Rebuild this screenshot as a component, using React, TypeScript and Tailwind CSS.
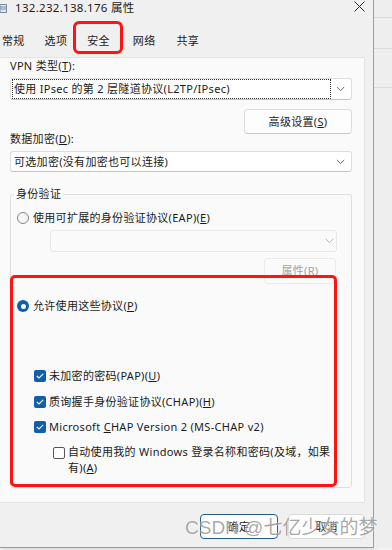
import type { ReactNode } from "react";

const TABS = [
  { label: "常规", cls: "ml-[2px]" },
  { label: "选项", cls: "ml-[20px]" },
  { label: "安全", cls: "ml-[20px]" },
  { label: "网络", cls: "ml-[23px]" },
  { label: "共享", cls: "ml-[21px]" },
];

function Chevron({ color = "#6b6b6b" }: { color?: string }) {
  return (
    <svg width="9" height="6" viewBox="0 0 9 6" className="shrink-0">
      <path d="M0.8 1 L4.5 4.6 L8.2 1" fill="none" stroke={color} strokeWidth="1" />
    </svg>
  );
}

function Combo({ children, focused }: { children: ReactNode; focused?: boolean }) {
  return (
    <div className="flex h-full w-full items-center rounded-[3px] border border-[#dedede] border-b-[#c4c4c4] bg-white pl-[2px] pr-[6px]">
      <div
        className={`flex h-[18px] flex-1 items-center pl-[1px] ${
          focused ? "outline-1 outline-dotted outline-[#333]" : ""
        }`}
      >
        {children}
      </div>
      <div className="ml-[6px]">
        <Chevron />
      </div>
    </div>
  );
}

function CheckBox({ checked }: { checked: boolean }) {
  if (!checked) {
    return <span className="inline-block h-[12px] w-[12px] shrink-0 rounded-[2px] border border-[#555] bg-white" />;
  }
  return (
    <span className="flex h-[12px] w-[12px] shrink-0 items-center justify-center rounded-[2px] bg-[#0f5fae]">
      <svg width="8" height="6" viewBox="0 0 8 6">
        <path d="M0.8 3 L3 5 L7.2 0.8" fill="none" stroke="#fff" strokeWidth="1.1" />
      </svg>
    </span>
  );
}

function Radio({ checked }: { checked: boolean }) {
  if (checked) {
    return (
      <span className="flex h-[12px] w-[12px] shrink-0 items-center justify-center rounded-full bg-[#0f5fae]">
        <span className="h-[5px] w-[5px] rounded-full bg-white" />
      </span>
    );
  }
  return <span className="inline-block h-[12px] w-[12px] shrink-0 rounded-full border border-[#858585] bg-[#f6f6f6]" />;
}

export default function App() {
  return (
    <div className="relative h-[550px] w-[392px] overflow-hidden bg-[#f4f4f4] text-[11px] leading-[16px] tracking-[0.3px] text-[#1b1b1b] [font-family:'Noto_Sans','Noto_Sans_CJK_SC',sans-serif]">
      <div className="flex">
        {/* dialog */}
        <div className="flex h-[548px] w-[374px] shrink-0 flex-col border-r border-b border-[#9c9c9c] bg-[#f0f0f0] shadow-[2px_2px_6px_rgba(0,0,0,0.12)]">
          {/* title bar */}
          <div className="flex h-[16px] items-center">
            <svg width="7" height="9" viewBox="0 0 7 9">
              <rect x="0" y="0.5" width="6.5" height="8" fill="#dfe6ee" stroke="#7d8fa6" strokeWidth="1" />
              <path d="M0 3 H6 M0 5 H6" stroke="#7d8fa6" strokeWidth="1" />
            </svg>
            <span className="ml-[8px] text-[11.5px]">132.232.138.176 属性</span>
            <svg width="11" height="11" viewBox="0 0 11 11" className="ml-auto mr-[8px] -mt-[3px]">
              <path d="M0.5 0.5 L10.5 10.5 M10.5 0.5 L0.5 10.5" stroke="#2b2b2b" strokeWidth="1" />
            </svg>
          </div>

          {/* tabs */}
          <div className="flex h-[41px] items-start pt-[17px]">
            {TABS.map((t) => (
              <span key={t.label} className={t.cls}>
                {t.label}
              </span>
            ))}
          </div>

          {/* tab page */}
          <div className="flex h-[446px] w-[365px] flex-col border-t border-r border-b border-[#e2e2e2] bg-[#fafafa] pl-[10px] pr-[12px]">
            <div className="h-[16px]">
              VPN 类型(<u>T</u>):
            </div>
            <div className="mt-[4px] h-[22px]">
              <Combo focused>使用 IPsec 的第 2 层隧道协议(L2TP/IPsec)</Combo>
            </div>
            <button className="mt-[9px] flex h-[25px] w-[108px] items-center justify-center self-end rounded-[4px] border border-[#dcdcdc] border-b-[#c8c8c8] bg-[#fdfdfd]">
              高级设置(<u>S</u>)
            </button>
            <div className="-mt-[3px] h-[16px]">
              数据加密(<u>D</u>):
            </div>
            <div className="mt-[4px] h-[21px]">
              <Combo>可选加密(没有加密也可以连接)</Combo>
            </div>

            <fieldset className="mt-[14px] w-[342px] rounded-[3px] border border-[#dedede] pb-[11px]">
              <legend className="ml-[3px] px-[2px]">身份验证</legend>

              <div className="mt-[8px] flex h-[16px] items-center pl-[6px]">
                <Radio checked={false} />
                <span className="ml-[4px]">
                  使用可扩展的身份验证协议(EAP)(<u>E</u>)
                </span>
              </div>

              <div className="ml-[39px] mt-[4px] flex h-[22px] w-[287px] items-center justify-end rounded-[3px] border border-[#e9e9e9] pr-[2px]">
                <Chevron color="#b5b5b5" />
              </div>

              <button className="mr-[15px] mt-[6px] ml-auto flex h-[26px] w-[72px] items-center justify-center rounded-[4px] border border-[#ececec] text-[#a3a3a3]">
                属性(R)
              </button>

              <div className="mt-[14px] flex h-[16px] items-center pl-[6px]">
                <Radio checked />
                <span className="ml-[4px]">
                  允许使用这些协议(<u>P</u>)
                </span>
              </div>

              <div className="mt-[54px] flex h-[16px] items-center pl-[23px]">
                <CheckBox checked />
                <span className="ml-[3px]">
                  未加密的密码(PAP)(<u>U</u>)
                </span>
              </div>
              <div className="mt-[10px] flex h-[16px] items-center pl-[23px]">
                <CheckBox checked />
                <span className="ml-[3px]">
                  质询握手身份验证协议(CHAP)(<u>H</u>)
                </span>
              </div>
              <div className="mt-[9px] flex h-[16px] items-center pl-[23px]">
                <CheckBox checked />
                <span className="ml-[3px]">
                  Microsoft <u>C</u>HAP Version 2 (MS-CHAP v2)
                </span>
              </div>
              <div className="mt-[9px] flex items-start pl-[42px]">
                <span className="mt-[3px]">
                  <CheckBox checked={false} />
                </span>
                <span className="ml-[3px]">
                  自动使用我的 Windows 登录名称和密码(及域，如果
                  <br />
                  有)(<u>A</u>)
                </span>
              </div>
            </fieldset>
          </div>

          {/* footer buttons */}
          <div className="mt-[11px] flex justify-end gap-[10px] pr-[8px]">
            <button className="flex h-[25px] w-[78px] items-center justify-center rounded-[4px] border border-[#1f5c8c] bg-[#fdfdfd]">
              确定
            </button>
            <button className="flex h-[25px] w-[77px] items-center justify-center rounded-[4px] border border-[#dadada] bg-[#fdfdfd]">
              取消
            </button>
          </div>
        </div>

        {/* window behind */}
        <div className="flex flex-1 flex-col bg-[#eeeeee]">
          <div className="h-[18px] border-b border-[#dadada]" />
          <div className="h-[31px] border-b border-[#dadada]" />
          <div className="h-[39px] border-b border-[#dadada]" />
        </div>
      </div>

      {/* red annotation boxes */}
      <div className="absolute left-[73px] top-[21px] h-[33px] w-[50px] rounded-[6px] border-[3px] border-[#ff1414]" />
      <div className="absolute left-[10px] top-[275px] h-[212px] w-[327px] rounded-[5px] border-[3px] border-[#ff1414]" />

      {/* watermark */}
      <div className="pointer-events-none absolute left-[185px] top-[516px] text-[19px] leading-[24px] tracking-normal text-[rgba(110,110,110,0.6)] [font-family:'Liberation_Sans','Noto_Sans_CJK_SC',sans-serif] [text-shadow:0_0_2px_#fff]">
        CSDN @七亿少女的梦
      </div>
    </div>
  );
}
